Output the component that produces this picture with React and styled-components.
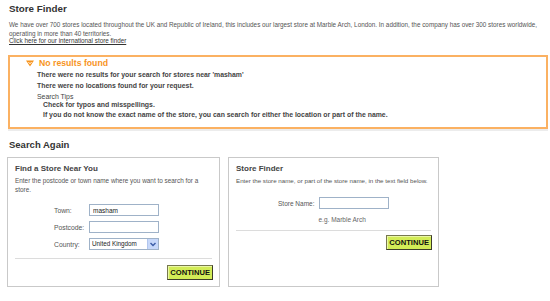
import React from 'react';
import styled, { createGlobalStyle } from 'styled-components';

const GlobalStyle = createGlobalStyle`
  body {
    margin: 0;
    background: #fff;
    font-family: "Liberation Sans", Arial, sans-serif;
    color: #555;
  }
`;

const Page = styled.div`
  width: 540px;
  padding: 2px 0 0 8px;
`;

const PageTitle = styled.h1`
  margin: 0 0 0 1px;
  font-size: 9.8px;
  line-height: 14px;
  font-weight: bold;
  color: #333;
`;

const Intro = styled.p`
  margin: 4px 0 0 1px;
  font-size: 6.35px;
  line-height: 9px;
  white-space: nowrap;
  color: #555;
`;

const IntlLink = styled.a`
  display: block;
  width: fit-content;
  margin: -2px 0 0 1px;
  font-size: 6.3px;
  line-height: 9px;
  color: #333;
  text-decoration: underline;
`;

const Notice = styled.div`
  margin-top: 10px;
  border: 2px solid #fbb162;
  padding: 0 0 8px 16px;
  box-shadow: 0 2px 0 #ececec;
`;

const NoticeTitle = styled.div`
  display: flex;
  align-items: center;
  gap: 5px;
  font-size: 8.7px;
  line-height: 12px;
  font-weight: bold;
  color: #f7941d;
`;

const NoticeBody = styled.div`
  padding-left: 11px;
  font-size: 6.9px;
  color: #444;
`;

const NoticeLine = styled.div`
  margin-top: ${(p) => p.$gap}px;
  padding-left: ${(p) => (p.$indent ? 6 : 0)}px;
  line-height: 8px;
  font-weight: ${(p) => (p.$plain ? 'normal' : 'bold')};
`;

const SectionTitle = styled.h2`
  margin: 10px 0 0 1px;
  font-size: 9.5px;
  line-height: 12px;
  font-weight: bold;
  color: #333;
`;

const Panels = styled.div`
  display: flex;
  gap: 8px;
  margin: 6px 0 0 -1px;
`;

const Panel = styled.div`
  display: flex;
  flex-direction: column;
  width: ${(p) => p.$width}px;
  height: 130px;
  border: 1px solid #c9c9c9;
  padding: 5px 6px 0 7px;
  box-sizing: border-box;
`;

const PanelTitle = styled.h3`
  margin: 0;
  font-size: 8px;
  line-height: 12px;
  font-weight: bold;
  color: #444;
`;

const PanelText = styled.p`
  margin: 1px 0 0;
  font-size: ${(p) => p.$size}px;
  line-height: 9px;
  white-space: ${(p) => (p.$single ? 'nowrap' : 'normal')};
  color: #555;
`;

const Form = styled.div`
  display: grid;
  grid-template-columns: ${(p) => p.$label} 70px;
  justify-content: start;
  row-gap: 5px;
  align-items: center;
  margin: ${(p) => p.$top}px 0 0 ${(p) => p.$offset}px;
`;

const Label = styled.label`
  font-size: ${(p) => (p.$right ? 6.5 : 6.8)}px;
  white-space: nowrap;
  color: #555;
  text-align: ${(p) => (p.$right ? 'right' : 'left')};
  padding-right: ${(p) => (p.$right ? 4 : 0)}px;
`;

const Field = styled.input`
  display: block;
  box-sizing: border-box;
  width: 70px;
  height: 12px;
  margin: 0;
  padding: 0 3px;
  border: 1px solid #9fb2c8;
  font-family: inherit;
  font-size: 6.5px;
  color: #222;
  outline: none;
`;

const SelectWrap = styled.div`
  position: relative;
  width: 70px;
  height: 12px;
`;

const Select = styled.select`
  display: block;
  appearance: none;
  box-sizing: border-box;
  width: 70px;
  height: 12px;
  margin: 0;
  padding: 0 0 0 2px;
  border: 1px solid #9fb2c8;
  border-radius: 0;
  background: #fff;
  font-family: inherit;
  font-size: 6.3px;
  line-height: 10px;
  color: #222;
`;

const SelectArrow = styled.span`
  position: absolute;
  top: 1px;
  right: 1px;
  bottom: 1px;
  width: 10px;
  display: flex;
  align-items: center;
  justify-content: center;
  background: #c7d8fa;
  border-left: 1px solid #b2c6ee;
  pointer-events: none;
`;

const Hint = styled.div`
  grid-column: 2;
  margin-top: 2px;
  font-size: 6.5px;
  color: #666;
`;

const Divider = styled.hr`
  margin: ${(p) => p.$top}px 1px 0 0;
  border: 0;
  border-top: 1px solid #dcdcdc;
`;

const ButtonRow = styled.div`
  display: flex;
  justify-content: flex-end;
  margin-top: ${(p) => p.$top}px;
`;

const Button = styled.button`
  height: 15px;
  padding: 0 2px;
  border: 1px solid #3d3d2a;
  border-top-color: #77784f;
  border-left-color: #77784f;
  background: #d3ec57;
  box-shadow: inset 1px 1px 0 #eaf7a4;
  font-family: inherit;
  font-size: 7.6px;
  font-weight: bold;
  color: #111;
  cursor: pointer;
`;

const Chevron = () => (
  <svg width="6" height="5" viewBox="0 0 6 5">
    <path d="M0.5 1 L3 3.6 L5.5 1" fill="none" stroke="#3d5ea8" strokeWidth="1.4" />
  </svg>
);

const DownTriangle = () => (
  <svg width="8" height="7" viewBox="0 0 8 7">
    <path d="M0 0.5 H8 L4 6.5 Z" fill="#f7941d" />
    <path d="M2.4 2 L4 3.8 L5.6 2" fill="none" stroke="#fff" strokeWidth="0.9" />
  </svg>
);

export default function App() {
  return (
    <>
      <GlobalStyle />
      <Page>
        <PageTitle>Store Finder</PageTitle>
        <Intro>
          We have over 700 stores located throughout the UK and Republic of Ireland, this includes our largest store at
          Marble Arch, London. In addition, the company has over 300 stores worldwide,
          <br />
          operating in more than 40 territories.
        </Intro>
        <IntlLink href="#">Click here for our international store finder</IntlLink>

        <Notice>
          <NoticeTitle>
            <DownTriangle />
            No results found
          </NoticeTitle>
          <NoticeBody>
            <NoticeLine $gap={2}>There were no results for your search for stores near 'masham'</NoticeLine>
            <NoticeLine $gap={3}>There were no locations found for your request.</NoticeLine>
            <NoticeLine $gap={3} $plain>Search Tips</NoticeLine>
            <NoticeLine $gap={0} $indent>Check for typos and misspellings.</NoticeLine>
            <NoticeLine $gap={2} $indent>
              If you do not know the exact name of the store, you can search for either the location or part of the name.
            </NoticeLine>
          </NoticeBody>
        </Notice>

        <SectionTitle>Search Again</SectionTitle>
        <Panels>
          <Panel $width={213}>
            <PanelTitle>Find a Store Near You</PanelTitle>
            <PanelText $size={6.4}>Enter the postcode or town name where you want to search for a store.</PanelText>
            <Form $label="35px" $offset={39} $top={10}>
              <Label>Town:</Label>
              <Field defaultValue="masham" />
              <Label>Postcode:</Label>
              <Field />
              <Label>Country:</Label>
              <SelectWrap>
                <Select defaultValue="uk">
                  <option value="uk">United Kingdom</option>
                </Select>
                <SelectArrow>
                  <Chevron />
                </SelectArrow>
              </SelectWrap>
            </Form>
            <Divider $top={8} />
            <ButtonRow $top={6}>
              <Button>CONTINUE</Button>
            </ButtonRow>
          </Panel>

          <Panel $width={211}>
            <PanelTitle>Store Finder</PanelTitle>
            <PanelText $size={6.2} $single>
              Enter the store name, or part of the store name, in the text field below.
            </PanelText>
            <Form $label="max-content" $offset={42} $top={12}>
              <Label $right>Store Name:</Label>
              <Field />
              <Hint>e.g. Marble Arch</Hint>
            </Form>
            <Divider $top={7} />
            <ButtonRow $top={4}>
              <Button>CONTINUE</Button>
            </ButtonRow>
          </Panel>
        </Panels>
      </Page>
    </>
  );
}
